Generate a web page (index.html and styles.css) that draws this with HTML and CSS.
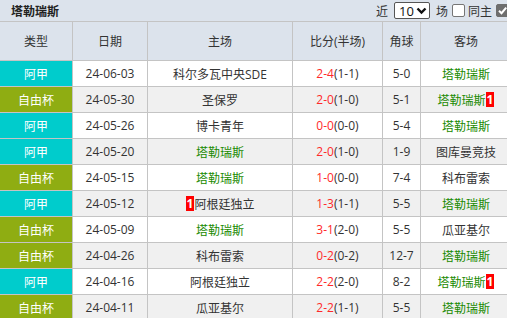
FILE: index.html
```html
<!DOCTYPE html>
<html lang="zh">
<head>
<meta charset="utf-8">
<link rel="stylesheet" href="styles.css">
</head>
<body>
<div class="wrap">
  <div class="bar">
    <span class="title">塔勒瑞斯</span>
    <div class="controls">
      <span>近</span>
      <span class="select">10<svg width="11" height="8" viewBox="0 0 11 8"><path d="M1.5 1.5 L5.5 5.5 L9.5 1.5" fill="none" stroke="#111" stroke-width="2.4"/></svg></span>
      <span>场</span>
      <span class="cb"></span>
      <span>同主</span>
      <span class="cb on"><svg width="11" height="11" viewBox="0 0 11 11"><path d="M2 5.8 L4.5 8.2 L9.2 2.6" fill="none" stroke="#fff" stroke-width="2"/></svg></span>
      <span>同赛事</span>
    </div>
  </div>
  <table class="tbl">
    <thead>
      <tr>
        <th class="c1">类型</th><th class="c2">日期</th><th class="c3">主场</th><th class="c4">比分(半场)</th><th class="c5">角球</th><th class="c6">客场</th>
      </tr>
    </thead>
    <tbody>
      <tr><td class="lg a">阿甲</td><td>24-06-03</td><td>科尔多瓦中央SDE</td><td><span class="r">2-4</span>(1-1)</td><td>5-0</td><td class="g">塔勒瑞斯</td></tr>
      <tr class="alt"><td class="lg b">自由杯</td><td>24-05-30</td><td>圣保罗</td><td><span class="r">2-0</span>(1-0)</td><td>5-1</td><td class="g">塔勒瑞斯<span class="rc">1</span></td></tr>
      <tr><td class="lg a">阿甲</td><td>24-05-26</td><td>博卡青年</td><td><span class="r">0-0</span>(0-0)</td><td>5-4</td><td class="g">塔勒瑞斯</td></tr>
      <tr class="alt"><td class="lg a">阿甲</td><td>24-05-20</td><td class="g">塔勒瑞斯</td><td><span class="r">2-0</span>(1-0)</td><td>1-9</td><td>图库曼竞技</td></tr>
      <tr><td class="lg b">自由杯</td><td>24-05-15</td><td class="g">塔勒瑞斯</td><td><span class="r">1-0</span>(0-0)</td><td>7-4</td><td>科布雷索</td></tr>
      <tr class="alt"><td class="lg a">阿甲</td><td>24-05-12</td><td><span class="rc">1</span>阿根廷独立</td><td><span class="r">1-3</span>(1-1)</td><td>5-5</td><td class="g">塔勒瑞斯</td></tr>
      <tr><td class="lg b">自由杯</td><td>24-05-09</td><td class="g">塔勒瑞斯</td><td><span class="r">3-1</span>(2-0)</td><td>5-5</td><td>瓜亚基尔</td></tr>
      <tr class="alt"><td class="lg b">自由杯</td><td>24-04-26</td><td>科布雷索</td><td><span class="r">0-2</span>(0-2)</td><td>12-7</td><td class="g">塔勒瑞斯</td></tr>
      <tr><td class="lg a">阿甲</td><td>24-04-16</td><td>阿根廷独立</td><td><span class="r">2-2</span>(2-0)</td><td>8-2</td><td class="g">塔勒瑞斯<span class="rc">1</span></td></tr>
      <tr class="alt"><td class="lg b">自由杯</td><td>24-04-11</td><td>瓜亚基尔</td><td><span class="r">2-2</span>(1-1)</td><td>5-5</td><td class="g">塔勒瑞斯</td></tr>
    </tbody>
  </table>
</div>
</body>
</html>
```

FILE: styles.css
```css
html, body {
  margin: 0;
  padding: 0;
  background: #fff;
}
.wrap {
  width: 507px;
  height: 318px;
  overflow: hidden;
  font-family: "Open Sans", "Noto Sans CJK SC", sans-serif;
  font-size: 12px;
  color: #333;
}
.bar {
  width: 548px;
  height: 21px;
  background: #dce3ec;
  border-bottom: 1px solid #c4c4c4;
  display: flex;
  align-items: center;
  white-space: nowrap;
}
.title {
  padding-left: 11px;
  font-weight: bold;
  color: #222;
}
.controls {
  margin-left: auto;
  display: flex;
  align-items: center;
  gap: 2px;
  color: #333;
  font-size: 12px;
}
.select {
  display: inline-flex;
  align-items: center;
  justify-content: space-between;
  box-sizing: border-box;
  width: 36px;
  height: 17px;
  margin: 0 4px;
  padding: 0 2px 0 4px;
  border: 1px solid #555;
  border-radius: 2px;
  background: #fff;
  color: #111;
  font-size: 13px;
}
.cb {
  display: inline-flex;
  align-items: center;
  justify-content: center;
  box-sizing: border-box;
  width: 13px;
  height: 13px;
  border: 1px solid #767676;
  border-radius: 2px;
  background: #fff;
  margin: 0 1px 0 2px;
}
.cb.on {
  background: #6e6e6e;
  border-color: #6e6e6e;
}
.tbl {
  border-collapse: separate;
  border-spacing: 0;
  table-layout: fixed;
  width: 512px;
}
.tbl th, .tbl td {
  box-sizing: border-box;
  border-right: 1px solid #c4c4c4;
  border-bottom: 1px solid #c4c4c4;
  padding: 0;
  text-align: center;
  white-space: nowrap;
  overflow: hidden;
}
.tbl th {
  height: 39px;
  background: #dce3ec;
  font-weight: normal;
  color: #333;
}
.c1 { width: 73px; }
.c2 { width: 75px; }
.c3 { width: 145px; }
.c4 { width: 90px; }
.c5 { width: 38px; }
.c6 { width: 91px; }
.tbl td {
  height: 26px;
  background: #fff;
  color: #333;
}
.tbl tr.alt td {
  background: #f0f0f0;
}
.tbl td.lg {
  color: #fff;
}
.tbl td.a, .tbl tr.alt td.a {
  background: #00cccc;
}
.tbl td.b, .tbl tr.alt td.b {
  background: #8fad12;
}
.tbl td.g {
  color: #1a8a00;
}
.r {
  color: #ff2a2a;
}
.rc {
  display: inline-block;
  background: #f00;
  color: #fff;
  font-weight: bold;
  line-height: 15px;
  padding: 0 1px;
  vertical-align: 1px;
}
```
